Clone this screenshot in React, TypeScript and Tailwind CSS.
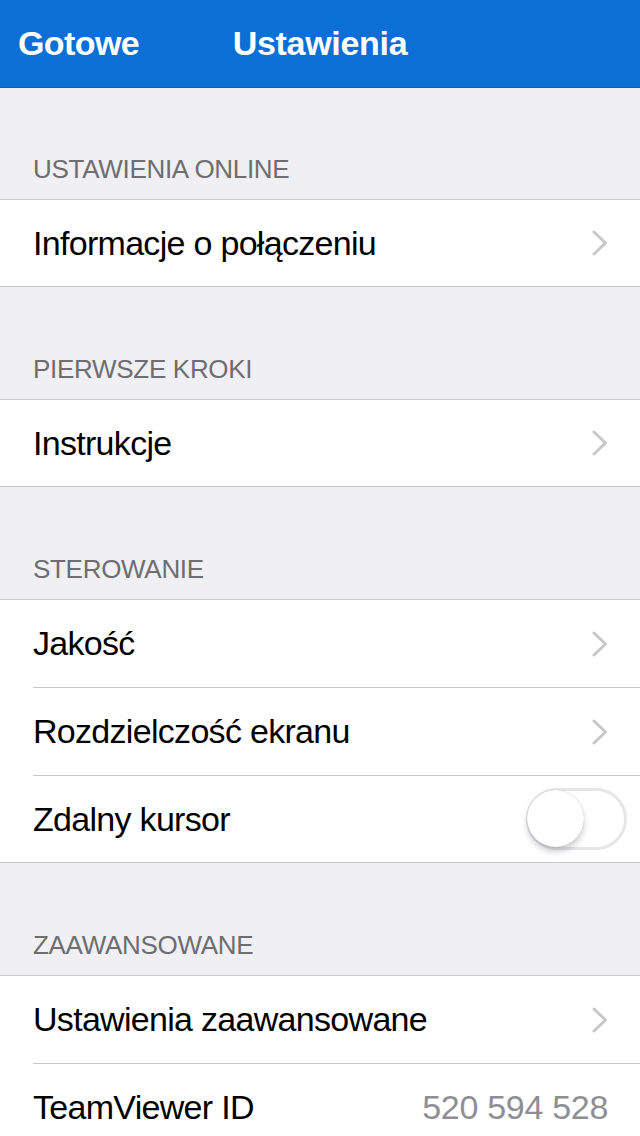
import { ReactNode } from "react";

const font = { fontFamily: '"Liberation Sans", Arial, sans-serif' };

function Chevron() {
  return (
    <svg width="16" height="26" viewBox="0 0 16 26" fill="none" className="shrink-0">
      <path d="M2 2 L13.5 13 L2 24" stroke="#c7c7cc" strokeWidth="3" strokeLinecap="round" strokeLinejoin="round" />
    </svg>
  );
}

function Toggle() {
  return (
    <div className="relative -mr-[19px] h-[62px] w-[101px] shrink-0 rounded-full border-[3px] border-[#e5e5ea] bg-white">
      <div className="absolute -left-[2px] -top-[1px] h-[57px] w-[57px] rounded-full bg-white shadow-[0_5px_6px_rgba(0,0,0,0.18),0_0_1px_rgba(0,0,0,0.3)]" />
    </div>
  );
}

function SectionHeader({ title, first }: { title: string; first?: boolean }) {
  return (
    <div
      className={`flex items-end border-b border-[#c8c7cc] px-[33px] pb-[14px] ${
        first ? "h-[112px]" : "h-[113px]"
      }`}
    >
      <span className="text-[26px] leading-[32px] tracking-[-0.3px] text-[#6d6d72]">{title}</span>
    </div>
  );
}

function Row({ label, right, last }: { label: string; right: ReactNode; last?: boolean }) {
  return (
    <div className="bg-white pl-[33px]">
      <div
        className={`flex items-center justify-between pr-[32px] ${
          last ? "h-[86px]" : "h-[88px] border-b border-[#c8c7cc]"
        }`}
      >
        <span className="text-[34px] tracking-[-0.7px] text-black">{label}</span>
        {right}
      </div>
    </div>
  );
}

export default function App() {
  return (
    <div className="h-[1136px] w-[640px] overflow-hidden bg-[#efeff4]" style={font}>
      <header className="relative flex h-[88px] items-center justify-center border-b border-[#0a5fb6] bg-[#0b6fd6]">
        <span className="absolute left-[18px] text-[34px] font-semibold tracking-[-0.6px] text-white">Gotowe</span>
        <span className="text-[34px] font-semibold tracking-[-0.3px] text-white">Ustawienia</span>
      </header>

      <SectionHeader title="USTAWIENIA ONLINE" first />
      <div className="border-b border-[#c8c7cc]">
        <Row label="Informacje o połączeniu" right={<Chevron />} last />
      </div>

      <SectionHeader title="PIERWSZE KROKI" />
      <div className="border-b border-[#c8c7cc]">
        <Row label="Instrukcje" right={<Chevron />} last />
      </div>

      <SectionHeader title="STEROWANIE" />
      <div className="border-b border-[#c8c7cc]">
        <Row label="Jakość" right={<Chevron />} />
        <Row label="Rozdzielczość ekranu" right={<Chevron />} />
        <Row label="Zdalny kursor" right={<Toggle />} last />
      </div>

      <SectionHeader title="ZAAWANSOWANE" />
      <div>
        <Row label="Ustawienia zaawansowane" right={<Chevron />} />
        <Row
          label="TeamViewer ID"
          right={<span className="text-[34px] tracking-[-0.3px] text-[#8e8e93]">520 594 528</span>}
          last
        />
      </div>
    </div>
  );
}
